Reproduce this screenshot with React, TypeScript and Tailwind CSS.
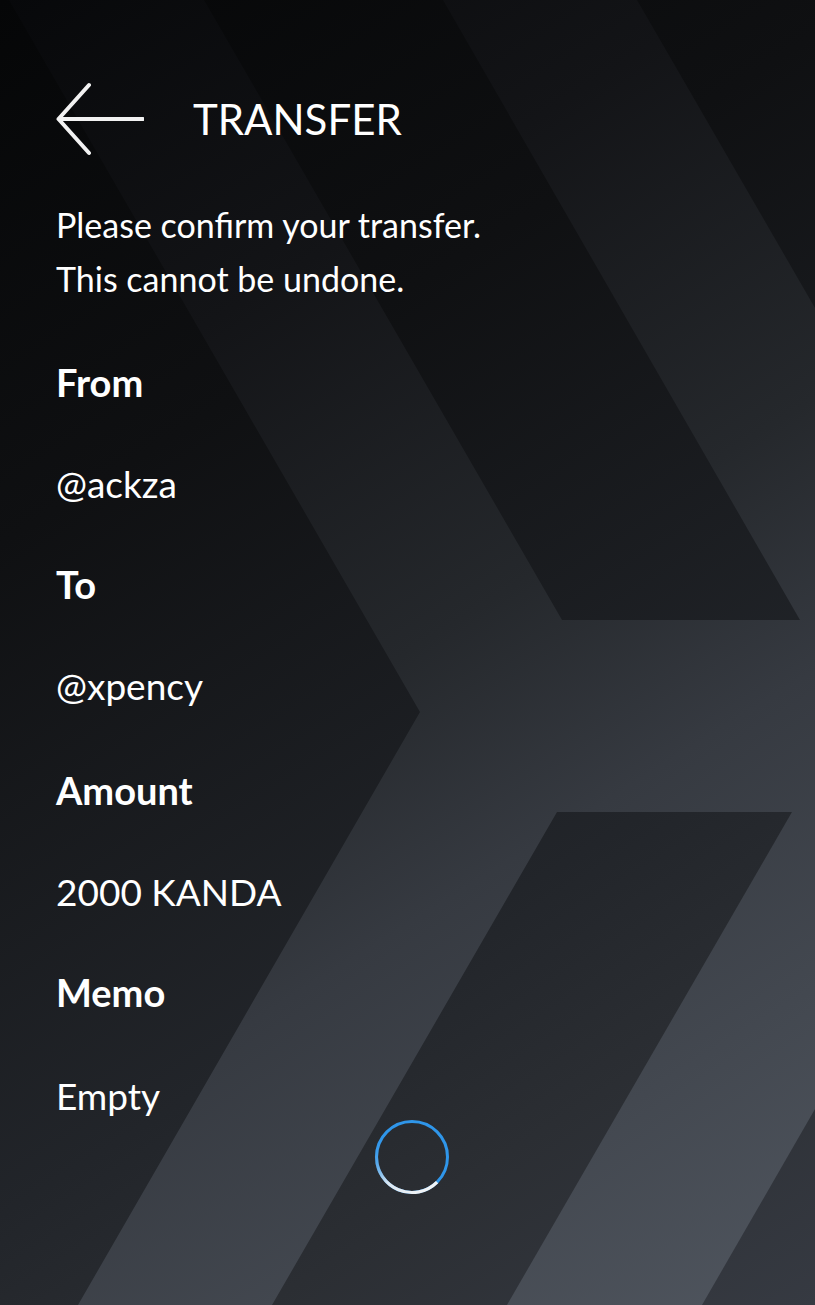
import React from "react"

const Background = () => (
  <svg
    className="absolute inset-0 h-full w-full"
    viewBox="0 0 815 1305"
    preserveAspectRatio="none"
  >
    <defs>
      <linearGradient id="base" gradientUnits="userSpaceOnUse" x1="0" y1="0" x2="815" y2="1305">
        <stop offset="0" stopColor="#050607" />
        <stop offset="0.3" stopColor="#0f1012" />
        <stop offset="0.67" stopColor="#22252a" />
        <stop offset="0.81" stopColor="#2b2e33" />
        <stop offset="1" stopColor="#363a42" />
      </linearGradient>
      <linearGradient id="band" gradientUnits="userSpaceOnUse" x1="0" y1="0" x2="815" y2="1305">
        <stop offset="0" stopColor="#07080a" />
        <stop offset="0.25" stopColor="#131417" />
        <stop offset="0.5" stopColor="#25282c" />
        <stop offset="0.65" stopColor="#363a41" />
        <stop offset="1" stopColor="#50565f" />
      </linearGradient>
    </defs>
    <rect width="815" height="1305" fill="url(#base)" />
    {/* big chevron + bar */}
    <polygon
      points="9,0 204,0 562,620 815,620 815,812 557,812 272,1305 78,1305 420,712"
      fill="url(#band)"
    />
    {/* upper right band */}
    <polygon points="443,0 637,0 815,308 815,620 800,620" fill="url(#band)" />
    {/* lower right band */}
    <polygon points="792,812 815,812 815,1109 702,1305 507,1305" fill="url(#band)" />
  </svg>
)

const BackArrow = () => (
  <svg width="88" height="74" viewBox="0 0 88 74" fill="none">
    <path
      d="M2.5 37 H87 M33 3 L2.5 37 L33 71"
      stroke="#f2f2f2"
      strokeWidth="4"
      strokeLinecap="round"
      strokeLinejoin="round"
    />
  </svg>
)

const Spinner = () => (
  <svg width="78" height="78" viewBox="0 0 78 78">
    <defs>
      <linearGradient id="spin" gradientUnits="userSpaceOnUse" x1="60" y1="66" x2="10" y2="14">
        <stop offset="0" stopColor="#f2f4f6" />
        <stop offset="0.45" stopColor="#d9e6f1" />
        <stop offset="1" stopColor="#3c9cec" stopOpacity="0" />
      </linearGradient>
    </defs>
    <circle cx="39" cy="39" r="35.5" fill="none" stroke="#2f96ea" strokeWidth="3" />
    {/* light tail from 4:30 round the bottom to 10 o'clock */}
    <path
      d="M64.1 64.1 A35.5 35.5 0 0 1 3.5 39 A35.5 35.5 0 0 1 8.3 21.2"
      fill="none"
      stroke="url(#spin)"
      strokeWidth="3.2"
    />
  </svg>
)

const rows = [
  { label: "From", value: "@ackza", labelGap: "mt-[56px]", valueGap: "mt-[62px]" },
  { label: "To", value: "@xpency", labelGap: "mt-[60px]", valueGap: "mt-[62px]" },
  { label: "Amount", value: "2000 KANDA", labelGap: "mt-[64px]", valueGap: "mt-[62px]" },
  { label: "Memo", value: "Empty", labelGap: "mt-[60px]", valueGap: "mt-[64px]" },
]

const App = () => {
  return (
    <div className="relative h-[1305px] w-full overflow-hidden text-white font-['Lato',sans-serif]">
      <Background />

      <div className="relative flex flex-col pl-[56px] pr-[47px] pt-[82px]">
        {/* header */}
        <div className="flex items-center gap-[49px]">
          <BackArrow />
          <h1 className="text-[42px] leading-[44px] font-normal">TRANSFER</h1>
        </div>

        {/* intro */}
        <div className="mt-[42px] text-[34px] leading-[54px]">
          <p>Please confirm your transfer.</p>
          <p>This cannot be undone.</p>
        </div>

        {/* details */}
        <div className="flex flex-col">
          {rows.map((r, i) => (
            <div key={i} className="flex flex-col">
              <h2 className={`${r.labelGap} text-[38px] leading-[40px] font-bold`}>{r.label}</h2>
              <p className={`${r.valueGap} text-[37px] leading-[40px]`}>{r.value}</p>
            </div>
          ))}
        </div>

        <div className="mt-[2px] flex justify-center">
          <Spinner />
        </div>
      </div>
    </div>
  )
}

export default App
